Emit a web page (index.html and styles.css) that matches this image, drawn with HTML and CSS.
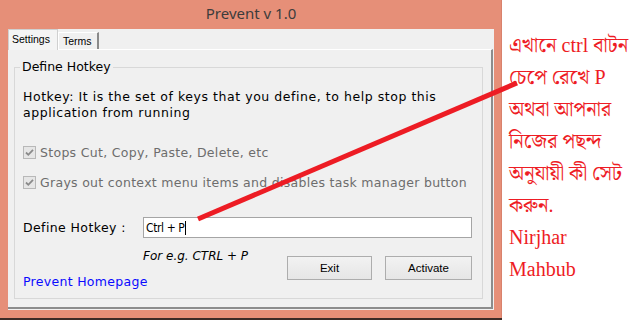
FILE: index.html
```html
<!DOCTYPE html>
<html lang="bn">
<head>
  <title>Prevent v 1.0</title>
  <meta charset="utf-8">
  <meta name="viewport" content="width=device-width, initial-scale=1">
  <link rel="stylesheet" href="styles.css">
</head>
<body>
  <div class="screen">
    <div class="desk">
      <div class="window">
        <div class="titlebar">Prevent v 1.0</div>
        <div class="client">
          <div class="tabs">
            <span class="tab tab-active">Settings</span>
            <span class="tab">Terms</span>
          </div>
          <div class="panel">
            <fieldset class="group">
              <legend>Define Hotkey</legend>
              <p class="intro">Hotkey: It is the set of keys that you define, to help stop this<br>application from running</p>
              <div class="check">
                <span class="box">
                  <svg width="11" height="11" viewBox="0 0 11 11"><path d="M2 5.5 L4.3 7.8 L9 2.8" fill="none" stroke="#8a8a8a" stroke-width="1.8"/></svg>
                </span>
                <span>Stops Cut, Copy, Paste, Delete, etc</span>
              </div>
              <div class="check check-second">
                <span class="box">
                  <svg width="11" height="11" viewBox="0 0 11 11"><path d="M2 5.5 L4.3 7.8 L9 2.8" fill="none" stroke="#8a8a8a" stroke-width="1.8"/></svg>
                </span>
                <span>Grays out context menu items and disables task manager button</span>
              </div>
              <div class="hotkey-row">
                <span class="hotkey-label">Define Hotkey :</span>
                <div class="field">Ctrl + P<span class="caret"></span></div>
              </div>
              <div class="footer">
                <div class="footer-left">
                  <p class="example">For e.g. CTRL + P</p>
                  <a href="#home" class="homepage">Prevent Homepage</a>
                </div>
                <div class="buttons">
                  <button class="button button-exit">Exit</button>
                  <button class="button">Activate</button>
                </div>
              </div>
            </fieldset>
          </div>
        </div>
      </div>
      <div class="strip"></div>
    </div>
    <aside class="note">
      <div class="note-line">এখানে ctrl বাটন</div>
      <div class="note-line">চেপে রেখে P</div>
      <div class="note-line">অথবা আপনার</div>
      <div class="note-line">নিজের পছন্দ</div>
      <div class="note-line">অনুযায়ী কী সেট</div>
      <div class="note-line">করুন.</div>
      <div class="note-line">Nirjhar</div>
      <div class="note-line">Mahbub</div>
    </aside>
    <svg class="pointer" width="638" height="320" viewBox="0 0 638 320">
      <line x1="198" y1="219" x2="517" y2="83" stroke="#ed1c24" stroke-width="5"/>
    </svg>
  </div>
</body>
</html>
```

FILE: styles.css
```css
*, *::before, *::after {
  margin: 0;
  padding: 0;
  box-sizing: border-box;
}

body {
  background-color: #FFFFFF;
  font-family: "DejaVu Sans", Verdana, sans-serif;
}

.screen {
  position: relative;
  display: flex;
  width: 638px;
  height: 320px;
  overflow: hidden;
  background-color: #FFFFFF;
}

.desk {
  display: flex;
  flex-direction: column;
  width: 502px;
}

.window {
  display: flex;
  flex-direction: column;
  height: 318px;
  padding: 0 7px 8px 8px;
  background-color: #E68F78;
  border-right: 1px solid #D9826C;
}

.titlebar {
  height: 29px;
  line-height: 27px;
  text-align: center;
  color: #3C3C3C;
  font-family: "Noto Sans", sans-serif;
  font-size: 15px;
}

.strip {
  height: 2px;
  background-color: #3B2B27;
}

.client {
  flex: 1;
  display: flex;
  flex-direction: column;
  padding: 0 1px 1px 0;
  background-color: #F0F0F0;
}

.tabs {
  display: flex;
  align-items: flex-end;
  height: 20px;
}

.tab {
  height: 17px;
  padding: 0 5px 0 4px;
  border: 1px solid #FFFFFF;
  border-right: 2px solid #8A8A8A;
  border-bottom: none;
  color: #000000;
  font-family: "Liberation Sans", Arial, sans-serif;
  font-size: 10.5px;
  line-height: 16px;
}

.tab-active {
  position: relative;
  height: 21px;
  margin-bottom: -1px;
  padding: 0 7px 0 3px;
  border: 1px solid #D0D0D0;
  border-bottom: none;
  background-color: #F4F4F4;
  line-height: 18px;
}

.panel {
  flex: 1;
  display: flex;
  flex-direction: column;
  padding: 9px 8px 8px 6px;
  border-top: 1px solid #FFFFFF;
  border-right: 2px solid #8C8C8C;
  border-bottom: 2px solid #8C8C8C;
}

.group {
  flex: 1;
  min-width: 0;
  padding: 0 10px 0 8px;
  border: 1px solid #D8D8D8;
  font-size: 12.5px;
  color: #000000;
}

.group legend {
  margin-left: -3px;
  padding: 0 2px;
  font-size: 12.5px;
  line-height: 16px;
}

.intro {
  margin-top: 14px;
  line-height: 16px;
  letter-spacing: 0.55px;
}

.check {
  display: flex;
  align-items: center;
  gap: 4px;
  margin-top: 23px;
  height: 16px;
  color: #6D6D6D;
  letter-spacing: 0.3px;
  white-space: nowrap;
}

.check-second {
  margin-top: 14px;
}

.box {
  display: flex;
  flex-shrink: 0;
  justify-content: center;
  align-items: center;
  width: 13px;
  height: 13px;
  border: 1px solid #B8B8B8;
  background-color: #E6E6E6;
}

.hotkey-row {
  display: flex;
  align-items: center;
  margin-top: 27px;
}

.hotkey-label {
  width: 120px;
  letter-spacing: 0.4px;
}

.field {
  display: flex;
  align-items: center;
  width: 329px;
  height: 21px;
  padding-left: 2px;
  border: 1px solid #A5A5A5;
  background-color: #FFFFFF;
  font-family: "Liberation Sans Narrow", "DejaVu Sans Condensed", sans-serif;
  font-stretch: condensed;
  font-size: 12px;
  letter-spacing: -0.4px;
}

.caret {
  width: 1px;
  height: 14px;
  margin-left: 1px;
  background-color: #000000;
}

.footer {
  display: flex;
  justify-content: space-between;
}

.footer-left {
  display: flex;
  flex-direction: column;
}

.example {
  margin: 10px 0 0 120px;
  font-size: 12px;
  font-style: italic;
  line-height: 16px;
}

.homepage {
  margin-top: 10px;
  color: #0A0AFF;
  text-decoration: none;
  line-height: 16px;
  letter-spacing: 0.3px;
}

.buttons {
  display: flex;
  gap: 13px;
  margin: 18px 0 0;
  align-self: flex-start;
}

.button {
  width: 87px;
  height: 24px;
  border: 1px solid #ADADAD;
  background: linear-gradient(#F2F2F2, #E6E6E6);
  color: #000000;
  font-family: "Liberation Sans", Arial, sans-serif;
  font-size: 11.5px;
}

.button-exit {
  width: 85px;
}

.note {
  flex: 1;
  padding: 29px 0 0 7px;
  color: #EE1C24;
  font-family: "Liberation Serif", "Noto Serif Bengali", "Noto Sans Bengali", "Lohit Bengali", "FreeSerif", serif;
  font-size: 20px;
}

.note-line {
  height: 32px;
  line-height: 32px;
  white-space: nowrap;
}

.pointer {
  position: absolute;
  top: 0;
  left: 0;
  pointer-events: none;
}
```
